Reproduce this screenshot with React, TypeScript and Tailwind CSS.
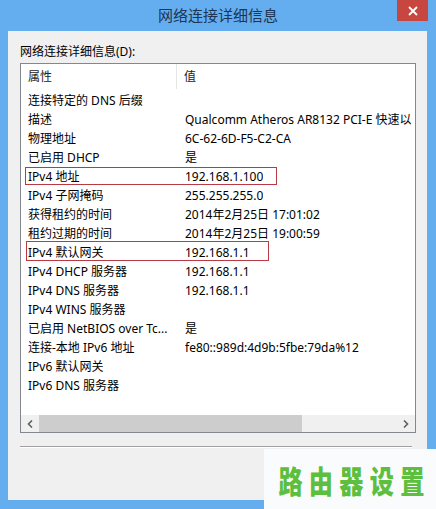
import React from "react";

const rows: { name: string; value: string; mark?: string }[] = [
  { name: "连接特定的 DNS 后缀", value: "" },
  { name: "描述", value: "Qualcomm Atheros AR8132 PCI-E 快速以" },
  { name: "物理地址", value: "6C-62-6D-F5-C2-CA" },
  { name: "已启用 DHCP", value: "是" },
  { name: "IPv4 地址", value: "192.168.1.100", mark: "a" },
  { name: "IPv4 子网掩码", value: "255.255.255.0" },
  { name: "获得租约的时间", value: "2014年2月25日 17:01:02" },
  { name: "租约过期的时间", value: "2014年2月25日 19:00:59" },
  { name: "IPv4 默认网关", value: "192.168.1.1", mark: "b" },
  { name: "IPv4 DHCP 服务器", value: "192.168.1.1" },
  { name: "IPv4 DNS 服务器", value: "192.168.1.1" },
  { name: "IPv4 WINS 服务器", value: "" },
  { name: "已启用 NetBIOS over Tc...", value: "是" },
  { name: "连接-本地 IPv6 地址", value: "fe80::989d:4d9b:5fbe:79da%12" },
  { name: "IPv6 默认网关", value: "" },
  { name: "IPv6 DNS 服务器", value: "" },
];

export default function App() {
  return (
    <div
      className="relative w-[436px] h-[509px] bg-[#64aef0] flex flex-col overflow-hidden text-[12px] text-black"
      style={{ fontFamily: '"Noto Sans", "Noto Sans CJK SC", sans-serif' }}
    >
      {/* Title bar */}
      <div className="relative h-[31px] flex items-center justify-center shrink-0">
        <span className="text-[15px] text-[#1c3554] leading-none -mt-[1px]">网络连接详细信息</span>
        <div className="absolute right-[8px] top-0 w-[31px] h-[21px] bg-[#c7463f] flex items-center justify-center">
          <svg width="10" height="10" viewBox="0 0 10 10">
            <path d="M1 1 L9 9 M9 1 L1 9" stroke="white" strokeWidth="1.8" />
          </svg>
        </div>
      </div>

      {/* Content */}
      <div className="ml-[8px] mr-[9px] h-[469px] bg-[#f0f0f0] flex flex-col pl-[12px] pr-[11px] pt-[14px]">
        <div className="h-[14px] leading-[14px] text-[12px]">网络连接详细信息(D):</div>

        {/* List box */}
        <div className="mt-[4px] w-[396px] h-[370px] border border-[#828790] bg-white flex flex-col overflow-hidden">
          <div className="h-[25px] flex items-center shrink-0 text-[#222]">
            <div className="w-[156px] shrink-0 pl-[7px] h-full flex items-center border-r border-[#e5e5e5]">属性</div>
            <div className="pl-[7px]">值</div>
          </div>
          <div className="flex-1 flex flex-col pt-[2px]">
            {rows.map((r, i) => (
              <div key={i} className="relative h-[19px] flex items-center shrink-0 whitespace-nowrap">
                <div className="w-[164px] shrink-0 pl-[7px] overflow-hidden">{r.name}</div>
                <div className="min-w-0 overflow-hidden">{r.value}</div>
                {r.mark === "a" && (
                  <div className="absolute left-[4px] top-0 w-[252px] h-[18px] border border-[#b83a44]" />
                )}
                {r.mark === "b" && (
                  <div className="absolute left-[5px] -top-[2px] w-[243px] h-[20px] border border-[#b83a44]" />
                )}
              </div>
            ))}
          </div>
          {/* Horizontal scrollbar */}
          <div className="h-[17px] shrink-0 bg-[#f0f0f0] flex items-center">
            <div className="w-[18px] h-full flex items-center justify-center">
              <svg width="6" height="8" viewBox="0 0 6 8">
                <path d="M5 0.5 L1.5 4 L5 7.5" stroke="#606060" strokeWidth="1.6" fill="none" />
              </svg>
            </div>
            <div className="w-[263px] h-full bg-[#cdcdcd]" />
            <div className="flex-1" />
            <div className="w-[18px] h-full flex items-center justify-center">
              <svg width="6" height="8" viewBox="0 0 6 8">
                <path d="M1 0.5 L4.5 4 L1 7.5" stroke="#606060" strokeWidth="1.6" fill="none" />
              </svg>
            </div>
          </div>
        </div>

        {/* Separator */}
        <div className="mt-[13px] w-[392px] h-px bg-[#a0a0a0]" />
        <div className="w-[392px] h-px bg-white" />
      </div>

      {/* Watermark */}
      <div className="absolute left-[264px] top-[449px] w-[172px] h-[60px] bg-[#fafbfd] flex items-center justify-center">
        <span
          className="inline-block shrink-0 whitespace-nowrap text-[31px] font-black text-[#5dbf3d] tracking-[8px] leading-none scale-x-[0.78] ml-[8px]"
          style={{ fontFamily: '"Noto Sans CJK SC", sans-serif' }}
        >
          路由器设置
        </span>
      </div>
    </div>
  );
}
